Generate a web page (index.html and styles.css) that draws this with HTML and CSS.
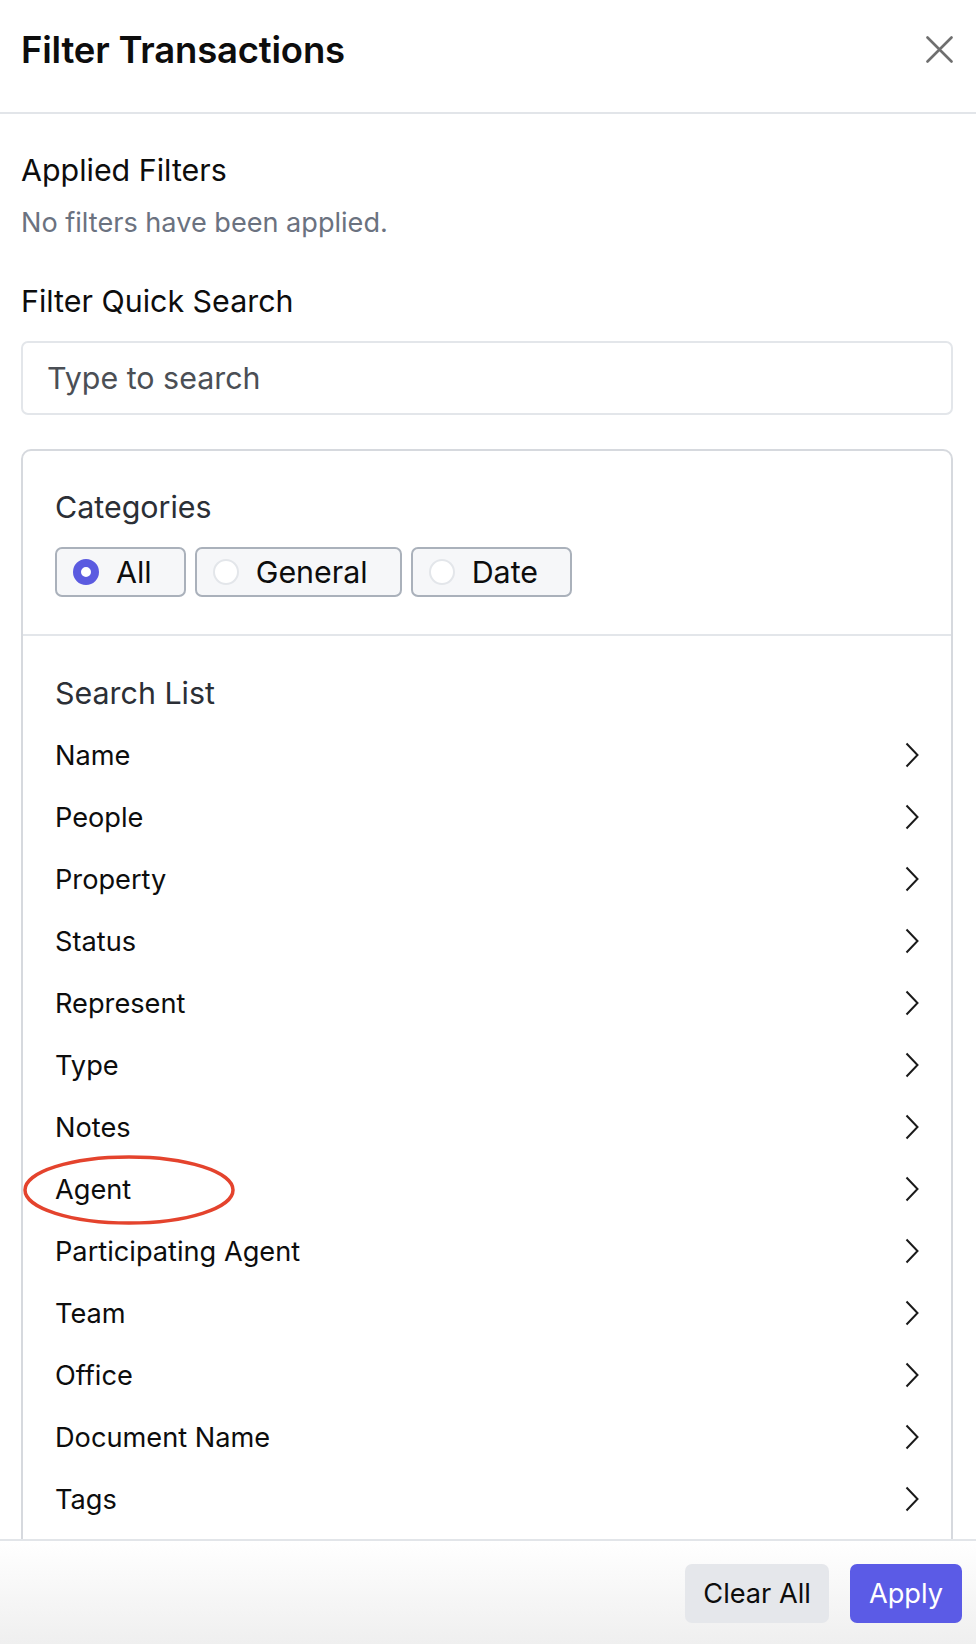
FILE: index.html
```html
<!DOCTYPE html>
<html lang="en">
<head>
<meta charset="utf-8">
<title>Filter Transactions</title>
<link rel="stylesheet" href="styles.css">
</head>
<body>
<div class="panel">
  <header class="header">
    <h1 class="title">Filter Transactions</h1>
    <button class="close" aria-label="Close">
      <svg width="27" height="27" viewBox="0 0 27 27"><path d="M1.5 1.5 L25.5 25.5 M25.5 1.5 L1.5 25.5" stroke="#6f6f6f" stroke-width="2.6" stroke-linecap="round" fill="none"/></svg>
    </button>
  </header>
  <main class="body">
    <h2 class="section-title applied">Applied Filters</h2>
    <p class="muted">No filters have been applied.</p>
    <h2 class="section-title quick">Filter Quick Search</h2>
    <div class="search">Type to search</div>
    <section class="card">
      <div class="categories">
        <h3 class="card-title">Categories</h3>
        <div class="radios">
          <label class="radio"><span class="dot checked"></span><span class="radio-label">All</span></label>
          <label class="radio"><span class="dot"></span><span class="radio-label">General</span></label>
          <label class="radio"><span class="dot"></span><span class="radio-label">Date</span></label>
        </div>
      </div>
      <div class="list">
        <h3 class="card-title list-title">Search List</h3>
        <ul class="items">
          <li class="item"><span>Name</span><svg class="chev" width="14" height="26" viewBox="0 0 14 26"><path d="M1.5 1.5 L12.5 13 L1.5 24.5" stroke="#1a1a1a" stroke-width="2" fill="none"/></svg></li>
          <li class="item"><span>People</span><svg class="chev" width="14" height="26" viewBox="0 0 14 26"><path d="M1.5 1.5 L12.5 13 L1.5 24.5" stroke="#1a1a1a" stroke-width="2" fill="none"/></svg></li>
          <li class="item"><span>Property</span><svg class="chev" width="14" height="26" viewBox="0 0 14 26"><path d="M1.5 1.5 L12.5 13 L1.5 24.5" stroke="#1a1a1a" stroke-width="2" fill="none"/></svg></li>
          <li class="item"><span>Status</span><svg class="chev" width="14" height="26" viewBox="0 0 14 26"><path d="M1.5 1.5 L12.5 13 L1.5 24.5" stroke="#1a1a1a" stroke-width="2" fill="none"/></svg></li>
          <li class="item"><span>Represent</span><svg class="chev" width="14" height="26" viewBox="0 0 14 26"><path d="M1.5 1.5 L12.5 13 L1.5 24.5" stroke="#1a1a1a" stroke-width="2" fill="none"/></svg></li>
          <li class="item"><span>Type</span><svg class="chev" width="14" height="26" viewBox="0 0 14 26"><path d="M1.5 1.5 L12.5 13 L1.5 24.5" stroke="#1a1a1a" stroke-width="2" fill="none"/></svg></li>
          <li class="item"><span>Notes</span><svg class="chev" width="14" height="26" viewBox="0 0 14 26"><path d="M1.5 1.5 L12.5 13 L1.5 24.5" stroke="#1a1a1a" stroke-width="2" fill="none"/></svg></li>
          <li class="item marked"><span>Agent</span><svg class="chev" width="14" height="26" viewBox="0 0 14 26"><path d="M1.5 1.5 L12.5 13 L1.5 24.5" stroke="#1a1a1a" stroke-width="2" fill="none"/></svg>
            <svg class="annotation" width="216" height="74" viewBox="0 0 216 74"><ellipse cx="108" cy="37" rx="104" ry="33" stroke="#e4432d" stroke-width="3.5" fill="none"/></svg>
          </li>
          <li class="item"><span>Participating Agent</span><svg class="chev" width="14" height="26" viewBox="0 0 14 26"><path d="M1.5 1.5 L12.5 13 L1.5 24.5" stroke="#1a1a1a" stroke-width="2" fill="none"/></svg></li>
          <li class="item"><span>Team</span><svg class="chev" width="14" height="26" viewBox="0 0 14 26"><path d="M1.5 1.5 L12.5 13 L1.5 24.5" stroke="#1a1a1a" stroke-width="2" fill="none"/></svg></li>
          <li class="item"><span>Office</span><svg class="chev" width="14" height="26" viewBox="0 0 14 26"><path d="M1.5 1.5 L12.5 13 L1.5 24.5" stroke="#1a1a1a" stroke-width="2" fill="none"/></svg></li>
          <li class="item"><span>Document Name</span><svg class="chev" width="14" height="26" viewBox="0 0 14 26"><path d="M1.5 1.5 L12.5 13 L1.5 24.5" stroke="#1a1a1a" stroke-width="2" fill="none"/></svg></li>
          <li class="item"><span>Tags</span><svg class="chev" width="14" height="26" viewBox="0 0 14 26"><path d="M1.5 1.5 L12.5 13 L1.5 24.5" stroke="#1a1a1a" stroke-width="2" fill="none"/></svg></li>
        </ul>
      </div>
    </section>
  </main>
  <footer class="footer">
    <button class="btn btn-secondary">Clear All</button>
    <button class="btn btn-primary">Apply</button>
  </footer>
</div>
</body>
</html>
```
FILE: styles.css
```css
* { box-sizing: border-box; }
html, body { margin: 0; padding: 0; background: #fff; }
body {
  font-family: Inter, "Liberation Sans", Arial, sans-serif;
  color: #111;
}
.panel {
  display: flex;
  flex-direction: column;
  height: 100vh;
  overflow: hidden;
}
.header {
  flex: none;
  height: 114px;
  display: flex;
  justify-content: space-between;
  align-items: flex-start;
  padding: 30px 23px 0 21px;
  border-bottom: 2px solid #e2e5e9;
}
.title {
  margin: 0;
  font-size: 36.5px;
  line-height: 40px;
  font-weight: 600;
  letter-spacing: -0.2px;
  color: #0d0d0d;
}
.close {
  border: 0;
  background: none;
  padding: 0;
  margin-top: 6px;
  width: 27px;
  height: 27px;
  display: flex;
}
.body {
  flex: 1;
  min-height: 0;
  overflow: hidden;
  padding: 38px 23px 0 21px;
}
.section-title {
  margin: 0;
  font-size: 30.4px;
  line-height: 36px;
  font-weight: 400;
  color: #0d0d0d;
}
.muted {
  margin: 18px 0 0;
  font-size: 27.1px;
  line-height: 34px;
  color: #6b7280;
}
.quick { margin-top: 43px; }
.search {
  margin-top: 22px;
  height: 74px;
  border: 2px solid #e3e6ea;
  border-radius: 7px;
  padding: 0 24px;
  display: flex;
  align-items: center;
  font-size: 30.4px;
  color: #4b4f55;
}
.card {
  margin-top: 34px;
  border: 2px solid #d6d9de;
  border-radius: 10px;
}
.categories {
  padding: 38px 32px 37px;
  border-bottom: 2px solid #e3e6ea;
}
.card-title {
  margin: 0;
  font-size: 30.4px;
  line-height: 36px;
  font-weight: 400;
  color: #2b2f36;
}
.radios {
  margin-top: 22px;
  display: flex;
  gap: 9px;
}
.radio {
  height: 50px;
  display: flex;
  align-items: center;
  gap: 17px;
  padding: 0 32px 0 16px;
  border: 2px solid #aab1bb;
  border-radius: 7px;
  background: #f6f7f9;
  font-size: 30.4px;
  color: #0d0d0d;
}
.dot {
  width: 26px;
  height: 26px;
  border-radius: 50%;
  border: 2px solid #e3e6ea;
  background: #fff;
  flex: none;
}
.dot.checked {
  border: 8px solid #5b5be0;
}
.list {
  padding: 39px 32px 40px;
}
.items {
  list-style: none;
  margin: 13px 0 0;
  padding: 0;
}
.item {
  position: relative;
  height: 62px;
  display: flex;
  align-items: center;
  justify-content: space-between;
  font-size: 27.2px;
  color: #0d0d0d;
}
.chev { flex: none; }
.annotation {
  position: absolute;
  left: -34px;
  top: -5px;
  pointer-events: none;
}
.footer {
  flex: none;
  height: 105px;
  border-top: 2px solid #e2e5e9;
  background: linear-gradient(#ffffff, #efefef);
  display: flex;
  justify-content: flex-end;
  align-items: flex-start;
  gap: 21px;
  padding: 23px 14px 0 0;
}
.btn {
  height: 59px;
  border: 0;
  border-radius: 7px;
  font-family: inherit;
  font-size: 27.2px;
  padding: 0 18px;
}
.btn-secondary { background: #e5e7eb; color: #0d0d0d; }
.btn-primary { background: #5b5be6; color: #fff; padding: 0 19px; }
```
